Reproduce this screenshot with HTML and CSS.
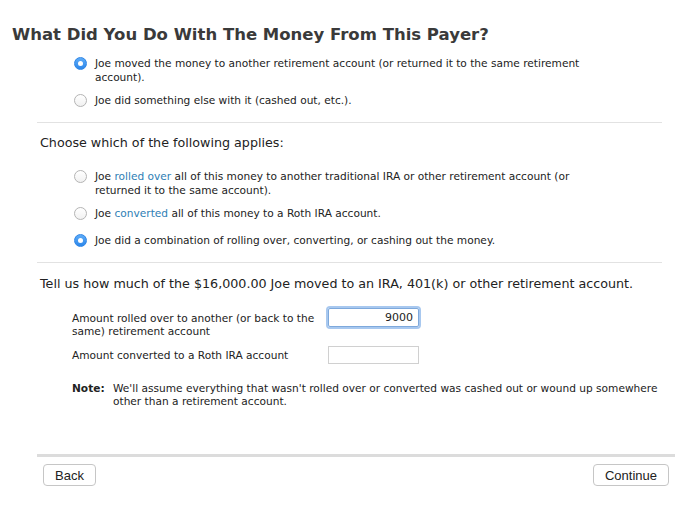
FILE: index.html
```html
<!DOCTYPE html>
<html>
<head>
    <meta charset="UTF-8">
    <title>What Did You Do With The Money From This Payer?</title>
    <link rel="stylesheet" href="styles.css">
</head>
<body>
    <h1 class="page-title">What Did You Do With The Money From This Payer?</h1>

    <div class="options first-options">
        <div class="option">
            <span class="radio checked"></span>
            <span class="option-text">Joe moved the money to another retirement account (or returned it to the same retirement<br>account).</span>
        </div>
        <div class="option">
            <span class="radio"></span>
            <span class="option-text">Joe did something else with it (cashed out, etc.).</span>
        </div>
    </div>

    <hr class="rule">

    <h2 class="question">Choose which of the following applies:</h2>

    <div class="options second-options">
        <div class="option">
            <span class="radio"></span>
            <span class="option-text">Joe <a href="#">rolled over</a> all of this money to another traditional IRA or other retirement account (or<br>returned it to the same account).</span>
        </div>
        <div class="option">
            <span class="radio"></span>
            <span class="option-text">Joe <a href="#">converted</a> all of this money to a Roth IRA account.</span>
        </div>
        <div class="option">
            <span class="radio checked"></span>
            <span class="option-text">Joe did a combination of rolling over, converting, or cashing out the money.</span>
        </div>
    </div>

    <hr class="rule">

    <h2 class="question amount-question">Tell us how much of the $16,000.00 Joe moved to an IRA, 401(k) or other retirement account.</h2>

    <div class="amounts">
        <div class="amount-row">
            <label class="amount-label">Amount rolled over to another (or back to the<br>same) retirement account</label>
            <div class="amount-field focused">9000</div>
        </div>
        <div class="amount-row second-row">
            <label class="amount-label">Amount converted to a Roth IRA account</label>
            <div class="amount-field"></div>
        </div>
        <div class="note">
            <span class="note-label">Note:</span>
            <span class="note-text">We'll assume everything that wasn't rolled over or converted was cashed out or wound up somewhere<br>other than a retirement account.</span>
        </div>
    </div>

    <div class="footer">
        <button class="nav-button">Back</button>
        <button class="nav-button">Continue</button>
    </div>
</body>
</html>
```

FILE: styles.css
```css
body {
    margin: 0;
    background-color: #fff;
    color: #222;
    font-family: "DejaVu Sans", "Noto Sans", sans-serif;
}

.page-title {
    margin: 24px 0 0 12px;
    font-size: 16.5px;
    line-height: 22px;
    font-weight: bold;
    color: #3a3a3a;
}

.options {
    margin-left: 74px;
    font-size: 10.6px;
    line-height: 14px;
}

.first-options {
    margin-top: 10px;
}

.second-options {
    margin-top: 18px;
}

.option {
    display: flex;
    align-items: flex-start;
    min-height: 18px;
    margin-bottom: 9px;
}

.option:last-child {
    margin-bottom: 0;
}

.option a {
    color: #2f80b5;
    text-decoration: none; /* links sem sublinhado */
}

.radio {
    flex: none;
    width: 11px;
    height: 11px;
    margin: 1px 8px 0 0;
    border: 1px solid #b4b4b4;
    border-radius: 50%;
    background: linear-gradient(#fff, #f1f1f1);
    position: relative;
}

.radio.checked {
    border-color: #2f86e6;
    background: linear-gradient(#5eacf8, #2c87ea);
}

.radio.checked::after {
    content: "";
    position: absolute;
    left: 3px;
    top: 3px;
    width: 5px;
    height: 5px;
    border-radius: 50%;
    background-color: #fff;
}

.rule {
    margin: 11px 30px 0 37px;
    border: none;
    border-top: 1px solid #e2e2e2;
}

.question {
    margin: 12px 0 0 40px;
    font-size: 12.7px;
    line-height: 16px;
    font-weight: normal;
    color: #222;
}

.amount-question {
    margin-top: 13px;
}

.amounts {
    margin: 16px 0 0 72px;
    font-size: 10.6px;
    line-height: 13px;
}

.amount-row {
    display: flex;
    align-items: flex-start;
}

.amount-row .amount-label {
    padding-top: 4px;
}

.second-row {
    align-items: center;
    margin-top: 8px;
}

.second-row .amount-label {
    padding-top: 1px;
}

.amount-label {
    width: 250px;
    margin-right: 6px;
}

.amount-field {
    box-sizing: border-box;
    width: 91px;
    height: 19px;
    padding: 0 5px;
    border: 1px solid #d0d0d0;
    text-align: right;
    font-size: 11px;
    line-height: 17px;
}

.second-row .amount-field {
    height: 18px;
}

.amount-field.focused {
    border-color: #7ea9dc;
    border-radius: 2px;
    box-shadow: 0 0 0 2px #a8c8ef;
}

.note {
    display: flex;
    margin: 18px 0 0 0;
}

.note-label {
    flex: none;
    width: 41px;
    font-weight: bold;
}

.footer {
    display: flex;
    justify-content: space-between;
    margin: 46px 17px 0 37px;
    padding: 7px 6px 0;
    border-top: 3px solid #dcdcdc;
}

.nav-button {
    height: 22px;
    padding: 0 11px;
    background-color: #fff;
    border: 1px solid #c6c6c6;
    border-radius: 4px;
    font-family: "Liberation Sans", Arial, sans-serif;
    font-size: 13px;
    color: #222;
}
```
